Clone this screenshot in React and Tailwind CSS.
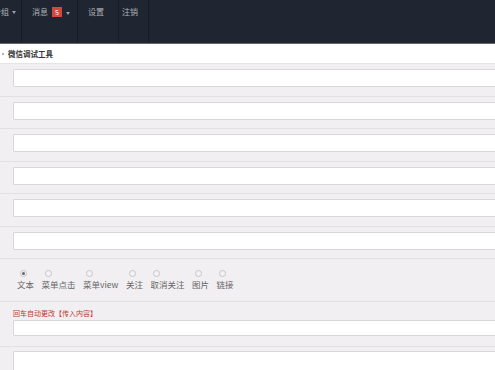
import React from "react";

const font = { fontFamily: '"Noto Sans CJK SC", "Noto Sans", sans-serif' };

function Caret() {
  return <span className="ml-[3px] inline-block h-0 w-0 border-x-[2.5px] border-t-[3px] border-x-transparent border-t-[#9aa0a8]" />;
}

function Row({ children, last }) {
  return (
    <div className={`pl-[13px] pt-[5px] pb-[8.5px] ${last ? "" : "border-b border-[#e2e0e3]"}`}>
      {children}
    </div>
  );
}

function Input({ h = "h-[18px]" }) {
  return <div className={`${h} w-[520px] rounded-[1px] border border-[#d9d7da] bg-white`} />;
}

const radios = ["文本", "菜单点击", "菜单view", "关注", "取消关注", "图片", "链接"];

export default function App() {
  return (
    <div className="h-[370px] w-[495px] overflow-hidden bg-[#f1eff1]" style={font}>
      <div className="flex h-[44px] items-start border-b border-[#62666d] bg-[#1f2631] text-[8px] text-[#aeb2b8]">
        <div className="h-[43px] border-r border-[#171c24] pr-[5px] pt-[6px]">
          <div className="flex items-center">
            <span className="-ml-[7px]">分组</span>
            <Caret />
          </div>
        </div>
        <div className="h-[43px] border-r border-[#171c24] pl-[10px] pr-[7px] pt-[6px]">
          <div className="flex items-center">
            <span>消息</span>
            <span className="ml-[4px] flex h-[10px] w-[10px] items-center justify-center bg-[#d9443f] text-[7px] leading-none text-white">5</span>
            <span className="ml-[1px]"><Caret /></span>
          </div>
        </div>
        <div className="h-[43px] border-r border-[#171c24] pl-[10px] pr-[14px] pt-[6px]">设置</div>
        <div className="h-[43px] border-r border-[#171c24] pl-[3px] pr-[10px] pt-[6px]">注销</div>
      </div>
      <div className="flex h-[20px] items-center border-b border-[#e6e4e7] bg-white text-[7.5px] font-bold text-[#333]">
        <span className="ml-[2px] mr-[4px] h-[2px] w-[2px] rounded-full bg-[#999]" />
        <span>微信调试工具</span>
      </div>
      <Row><Input /></Row>
      <Row><Input /></Row>
      <Row><Input /></Row>
      <Row><Input /></Row>
      <Row><Input /></Row>
      <Row><Input /></Row>
      <div className="flex border-b border-[#e2e0e3] pt-[11px] pb-[12px] pl-[17px] text-[8.5px] text-[#666]">
        {radios.map((r, i) => (
          <div key={r} className="mr-[7.5px] flex flex-col items-start">
            <span className="ml-[3px] flex h-[7px] w-[7px] items-center justify-center rounded-full border border-[#c6c4c7] bg-[#f4f3f4]">
              {i === 0 && <span className="h-[3px] w-[3px] rounded-full bg-[#666]" />}
            </span>
            <span className="mt-[2px] leading-[10px]">{r}</span>
          </div>
        ))}
      </div>
      <div className="border-b border-[#e2e0e3] pl-[13px] pt-[6px] pb-[10px]">
        <div className="text-[7px] leading-[10px] text-[#c0392b]">回车自动更改【传入内容】</div>
        <div className="mt-[2px]"><Input h="h-[16px]" /></div>
      </div>
      <div className="pl-[13px] pt-[4px]">
        <div className="h-[40px] w-[520px] rounded-[1px] border border-[#d9d7da] bg-white" />
      </div>
    </div>
  );
}
